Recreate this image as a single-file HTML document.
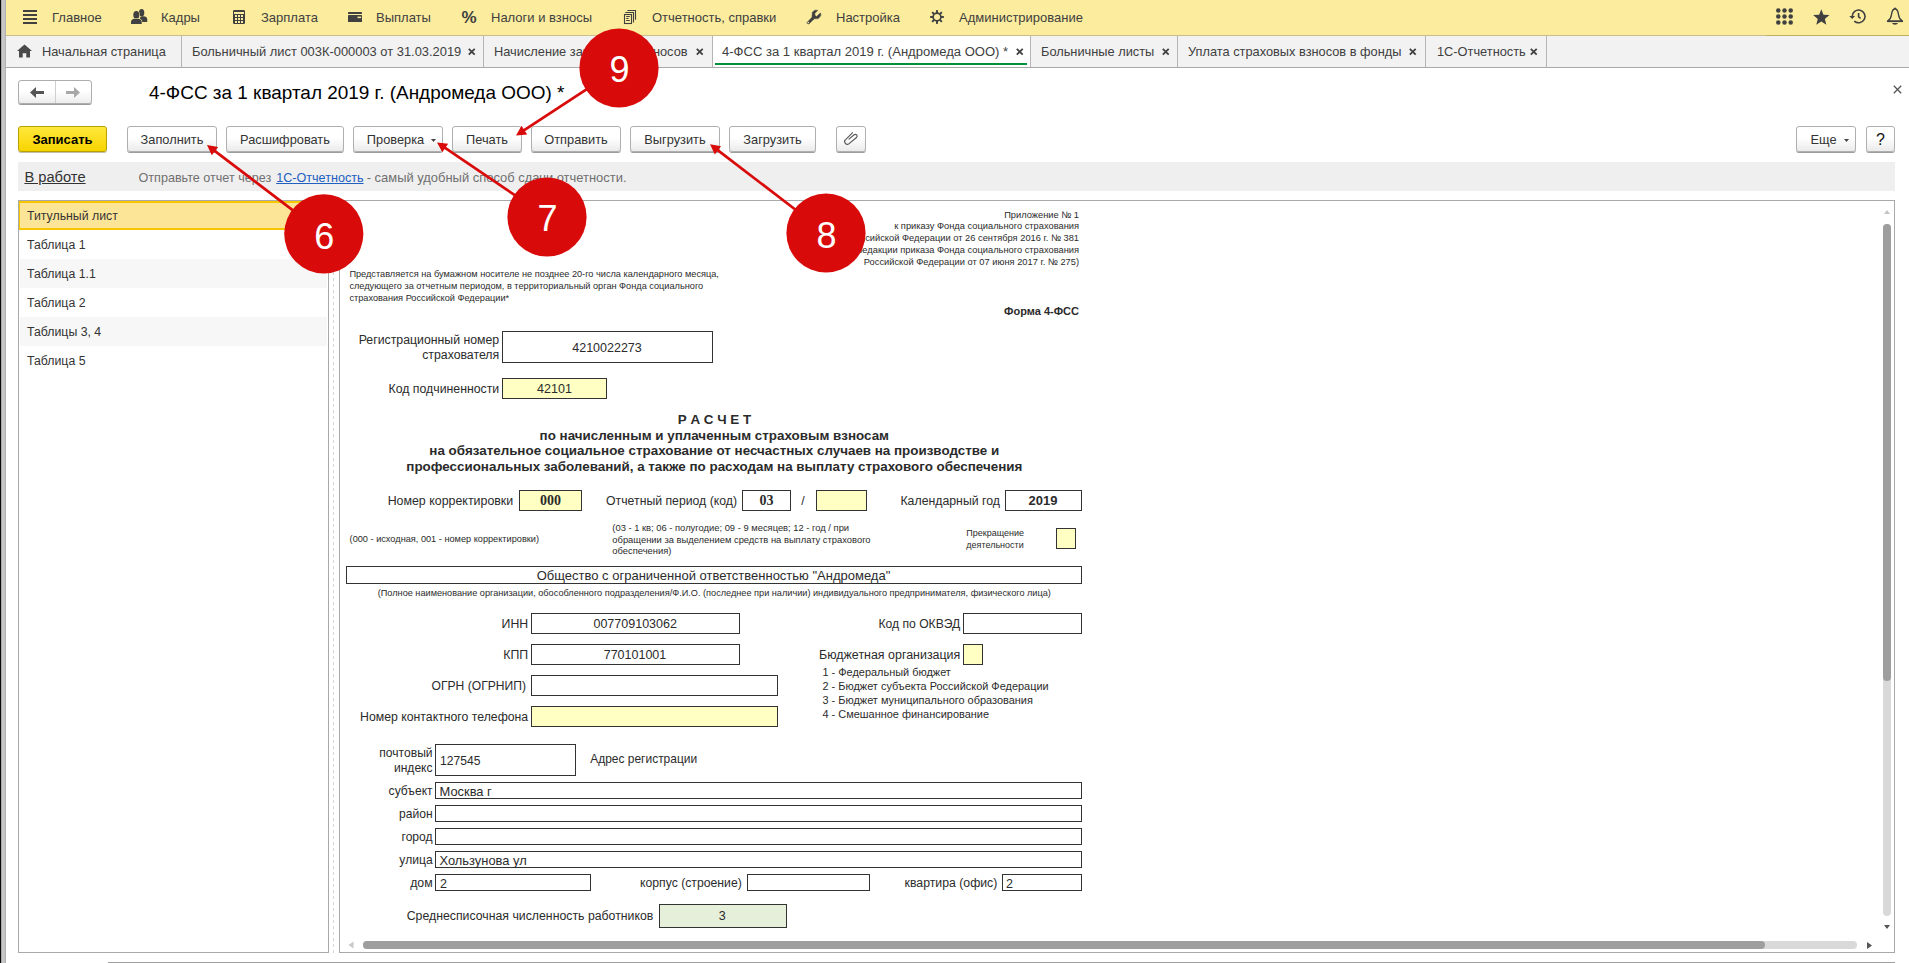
<!DOCTYPE html>
<html><head><meta charset="utf-8"><title>4-ФСС</title>
<style>
html,body{margin:0;padding:0}
body{width:1909px;height:963px;position:relative;overflow:hidden;background:#fff;font-family:'Liberation Sans',sans-serif}
.t{position:absolute;white-space:nowrap;line-height:1}
svg{overflow:visible}
</style></head><body>
<div style="position:absolute;left:0px;top:0px;width:1px;height:963px;background:#0a0a0a"></div><div style="position:absolute;left:1px;top:0px;width:5px;height:963px;background:linear-gradient(90deg,#9a9a9a,#c8c8c8 30%,#c4c4c4 70%,#a8a8a8)"></div><div style="position:absolute;left:6px;top:0px;width:1903px;height:35px;background:#FBEC9E"></div><div style="position:absolute;left:6px;top:35px;width:1760px;height:1px;background:#C9BF8C"></div><div style="position:absolute;left:1766px;top:35px;width:143px;height:1px;background:#BEB062"></div><div style="position:absolute;left:23px;top:10px;width:14px;height:2px;background:#404040"></div><div style="position:absolute;left:23px;top:14px;width:14px;height:2px;background:#404040"></div><div style="position:absolute;left:23px;top:18px;width:14px;height:2px;background:#404040"></div><div style="position:absolute;left:23px;top:22px;width:14px;height:2px;background:#404040"></div><div class="t" style="left:52.00px;top:11.00px;font-size:13px;color:#404040;font-family:'Liberation Sans',sans-serif;">Главное</div><svg style="position:absolute;left:131px;top:8px" width="17" height="17" viewBox="0 0 17 17"><g fill="#404040">
<ellipse cx="10.6" cy="4.7" rx="2.7" ry="3.8"/>
<path d="M9 14 L9 9.6 C9.8 8.8 11 8.3 12.6 8.3 C14.6 8.3 16.2 9.3 16.2 11.2 L16.2 14 Z"/>
</g>
<g fill="#404040" stroke="#FBEC9E" stroke-width="1.1" paint-order="stroke">
<ellipse cx="5.3" cy="6.9" rx="3" ry="3.9"/>
<path d="M0 16 L0 13.8 C0 12 1.6 10.9 3.4 10.7 L7.3 10.7 C9 10.9 10.7 12 10.7 13.8 L10.7 16 Z"/>
</g></svg><div class="t" style="left:161.00px;top:11.00px;font-size:13px;color:#404040;font-family:'Liberation Sans',sans-serif;">Кадры</div><svg style="position:absolute;left:233px;top:10px" width="12" height="14" viewBox="0 0 12 14"><rect x="0" y="0" width="12" height="14" rx="1.2" fill="#404040"/>
<rect x="1" y="2" width="10" height="2" fill="#FBEC9E"/>
<g fill="#FBEC9E"><rect x="2" y="5" width="2" height="2"/><rect x="5" y="5" width="2" height="2"/><rect x="8" y="5" width="2" height="2"/><rect x="2" y="8" width="2" height="2"/><rect x="5" y="8" width="2" height="2"/><rect x="8" y="8" width="2" height="2"/><rect x="2" y="11" width="2" height="2"/><rect x="5" y="11" width="2" height="2"/><rect x="8" y="11" width="2" height="2"/></g></svg><div class="t" style="left:261.00px;top:11.00px;font-size:13px;color:#404040;font-family:'Liberation Sans',sans-serif;">Зарплата</div><svg style="position:absolute;left:348px;top:12px" width="14" height="10" viewBox="0 0 14 10"><rect x="0" y="0" width="14" height="2" rx="0.6" fill="#404040"/>
<rect x="0" y="3" width="14" height="7" rx="0.6" fill="#404040"/>
<rect x="9.5" y="4.6" width="3.6" height="1.5" fill="#FBEC9E"/></svg><div class="t" style="left:376.00px;top:11.00px;font-size:13px;color:#404040;font-family:'Liberation Sans',sans-serif;">Выплаты</div><div class="t" style="left:461.50px;top:9.00px;font-size:17px;color:#404040;font-weight:bold;font-family:'Liberation Sans',sans-serif;">%</div><div class="t" style="left:491.00px;top:11.00px;font-size:13px;color:#404040;font-family:'Liberation Sans',sans-serif;">Налоги и взносы</div><svg style="position:absolute;left:615px;top:4px" width="24" height="22" viewBox="0 0 24 22"><g fill="none" stroke="#404040" stroke-width="1.1">
<rect x="9.5" y="10.5" width="7" height="9"/>
<path d="M10.3 8.5 H18.5 V18.6"/>
<path d="M12.3 6.5 H20.5 V15.7"/>
<path d="M11.2 12.5 H14.8 M11.2 14.5 H13.6 M11.2 16.5 H14.8"/>
</g></svg><div class="t" style="left:652.00px;top:11.00px;font-size:13px;color:#404040;font-family:'Liberation Sans',sans-serif;">Отчетность, справки</div><svg style="position:absolute;left:802px;top:6px" width="24" height="22" viewBox="0 0 24 22"><polygon fill="#404040" stroke="#404040" stroke-width="0.5" stroke-linejoin="round" points="10.3,6.2 12.8,4.2 15.75,4.3 12.8,7.5 13,9.6 14.6,10.5 18,7.3 18.7,7.1 18.7,9.8 16.4,12.6 12.3,12.8 6.85,18 4.6,16.9 10,11.2"/>
<circle cx="6.3" cy="16.5" r="0.8" fill="#FBEC9E"/></svg><div class="t" style="left:836.00px;top:11.00px;font-size:13px;color:#404040;font-family:'Liberation Sans',sans-serif;">Настройка</div><svg style="position:absolute;left:929px;top:9px" width="16" height="16" viewBox="0 0 16 16"><g fill="#404040"><rect x="7.05" y="1.1" width="1.9" height="3" transform="rotate(0 8 8)"/><rect x="7.05" y="1.1" width="1.9" height="3" transform="rotate(45 8 8)"/><rect x="7.05" y="1.1" width="1.9" height="3" transform="rotate(90 8 8)"/><rect x="7.05" y="1.1" width="1.9" height="3" transform="rotate(135 8 8)"/><rect x="7.05" y="1.1" width="1.9" height="3" transform="rotate(180 8 8)"/><rect x="7.05" y="1.1" width="1.9" height="3" transform="rotate(225 8 8)"/><rect x="7.05" y="1.1" width="1.9" height="3" transform="rotate(270 8 8)"/><rect x="7.05" y="1.1" width="1.9" height="3" transform="rotate(315 8 8)"/></g><circle cx="8" cy="8" r="3.9" fill="none" stroke="#404040" stroke-width="1.7"/></svg><div class="t" style="left:959.00px;top:11.00px;font-size:13px;color:#404040;font-family:'Liberation Sans',sans-serif;">Администрирование</div><svg style="position:absolute;left:1776px;top:8px" width="17" height="17" viewBox="0 0 17 17"><circle cx="2.3" cy="2.4" r="2.25" fill="#404040"/><circle cx="2.3" cy="8.4" r="2.25" fill="#404040"/><circle cx="2.3" cy="14.4" r="2.25" fill="#404040"/><circle cx="8.5" cy="2.4" r="2.25" fill="#404040"/><circle cx="8.5" cy="8.4" r="2.25" fill="#404040"/><circle cx="8.5" cy="14.4" r="2.25" fill="#404040"/><circle cx="14.7" cy="2.4" r="2.25" fill="#404040"/><circle cx="14.7" cy="8.4" r="2.25" fill="#404040"/><circle cx="14.7" cy="14.4" r="2.25" fill="#404040"/></svg><svg style="position:absolute;left:1813px;top:8px" width="17" height="18" viewBox="0 0 17 18"><polygon fill="#404040" points="8.30,1.20 10.47,6.78 16.45,7.12 11.82,10.91 13.34,16.70 8.30,13.47 3.26,16.70 4.78,10.91 0.15,7.12 6.13,6.78"/></svg><svg style="position:absolute;left:1848px;top:8px" width="19" height="18" viewBox="0 0 19 18"><g fill="none" stroke="#404040" stroke-width="1.6">
<path d="M4.2 8.4 A6.4 6.4 0 1 1 6.27 13.11"/>
<path d="M10.6 5 V8.9 L12.6 10.4"/>
</g>
<path d="M1.3 7.9 L7.1 7.9 L4.2 11.1 Z" fill="#404040"/></svg><svg style="position:absolute;left:1886px;top:7px" width="18" height="19" viewBox="0 0 18 19"><path fill="none" stroke="#404040" stroke-width="1.4" stroke-linejoin="round" d="M9 1.7 C6.6 1.9 5.9 4.2 5.4 8 C5 11 4.4 12.6 1.6 14.2 L16.4 14.2 C13.6 12.6 13 11 12.6 8 C12.1 4.2 11.4 1.9 9 1.7 Z"/>
<path d="M1.2 14.3 H16.8" stroke="#404040" stroke-width="1.6"/>
<path fill="#404040" d="M6.1 16.1 H11.9 C11.5 17.3 10.4 17.7 9 17.7 C7.6 17.7 6.5 17.3 6.1 16.1 Z"/>
<circle cx="9" cy="1.3" r="0.9" fill="#404040"/></svg><div style="position:absolute;left:6px;top:36px;width:1903px;height:31px;background:#F2F2F2"></div><div style="position:absolute;left:6px;top:67px;width:1903px;height:1px;background:#A9A9A9"></div><div style="position:absolute;left:712px;top:36px;width:318px;height:31px;background:#FFFFFF"></div><div style="position:absolute;left:181px;top:36px;width:1px;height:31px;background:#B5B5B5"></div><div style="position:absolute;left:483px;top:36px;width:1px;height:31px;background:#B5B5B5"></div><div style="position:absolute;left:712px;top:36px;width:1px;height:31px;background:#B5B5B5"></div><div style="position:absolute;left:1030px;top:36px;width:1px;height:31px;background:#B5B5B5"></div><div style="position:absolute;left:1177px;top:36px;width:1px;height:31px;background:#B5B5B5"></div><div style="position:absolute;left:1425px;top:36px;width:1px;height:31px;background:#B5B5B5"></div><div style="position:absolute;left:1546px;top:36px;width:1px;height:31px;background:#B5B5B5"></div><div style="position:absolute;left:715px;top:63px;width:312px;height:2px;background:#00903A"></div><svg style="position:absolute;left:17px;top:44px" width="16" height="14" viewBox="0 0 16 14"><path fill="#4a4a4a" d="M7.5 0.5 L15 7 L13 7 L13 13.5 L9.3 13.5 L9.3 9.3 L5.7 9.3 L5.7 13.5 L2 13.5 L2 7 L0 7 Z"/></svg><div class="t" style="left:42.00px;top:46.00px;font-size:12.8px;color:#404040;font-family:'Liberation Sans',sans-serif;">Начальная страница</div><div class="t" style="left:192.00px;top:46.00px;font-size:12.9px;color:#404040;font-family:'Liberation Sans',sans-serif;">Больничный лист 003К-000003 от 31.03.2019</div><div class="t" style="left:494.00px;top:46.00px;font-size:12.8px;color:#404040;font-family:'Liberation Sans',sans-serif;">Начисление зарплаты и взносов</div><div class="t" style="left:722.00px;top:45.00px;font-size:13.05px;color:#404040;font-family:'Liberation Sans',sans-serif;">4-ФСС за 1 квартал 2019 г. (Андромеда ООО) *</div><div class="t" style="left:1041.00px;top:46.00px;font-size:12.8px;color:#404040;font-family:'Liberation Sans',sans-serif;">Больничные листы</div><div class="t" style="left:1188.00px;top:46.00px;font-size:12.8px;color:#404040;font-family:'Liberation Sans',sans-serif;">Уплата страховых взносов в фонды</div><div class="t" style="left:1437.00px;top:46.00px;font-size:12.8px;color:#404040;font-family:'Liberation Sans',sans-serif;">1С-Отчетность</div><svg style="position:absolute;left:467.5px;top:48px" width="7.5" height="7.5" viewBox="0 0 7.5 7.5"><path d="M0.8 0.8 L6.7 6.7 M6.7 0.8 L0.8 6.7" stroke="#404040" stroke-width="1.8"/></svg><svg style="position:absolute;left:696px;top:48px" width="7.5" height="7.5" viewBox="0 0 7.5 7.5"><path d="M0.8 0.8 L6.7 6.7 M6.7 0.8 L0.8 6.7" stroke="#404040" stroke-width="1.8"/></svg><svg style="position:absolute;left:1015.5px;top:48px" width="7.5" height="7.5" viewBox="0 0 7.5 7.5"><path d="M0.8 0.8 L6.7 6.7 M6.7 0.8 L0.8 6.7" stroke="#404040" stroke-width="1.8"/></svg><svg style="position:absolute;left:1162px;top:48px" width="7.5" height="7.5" viewBox="0 0 7.5 7.5"><path d="M0.8 0.8 L6.7 6.7 M6.7 0.8 L0.8 6.7" stroke="#404040" stroke-width="1.8"/></svg><svg style="position:absolute;left:1409px;top:48px" width="7.5" height="7.5" viewBox="0 0 7.5 7.5"><path d="M0.8 0.8 L6.7 6.7 M6.7 0.8 L0.8 6.7" stroke="#404040" stroke-width="1.8"/></svg><svg style="position:absolute;left:1530px;top:48px" width="7.5" height="7.5" viewBox="0 0 7.5 7.5"><path d="M0.8 0.8 L6.7 6.7 M6.7 0.8 L0.8 6.7" stroke="#404040" stroke-width="1.8"/></svg><div style="position:absolute;left:18px;top:80px;width:74px;height:24px;box-sizing:border-box;border:1px solid #ADADAD;border-radius:3px;background:linear-gradient(#fff 0%,#fff 45%,#EDEDED 100%);box-shadow:0 1px 0 #9a9a9a"></div><div style="position:absolute;left:55px;top:81px;width:1px;height:22px;background:#CFCFCF"></div><svg style="position:absolute;left:30px;top:87px" width="15" height="11" viewBox="0 0 15 11"><path fill="#555" d="M0 5.4 L6 0 L6 4 L14 4 L14 7 L6 7 L6 11 Z"/></svg><svg style="position:absolute;left:66px;top:87px" width="15" height="11" viewBox="0 0 15 11"><path fill="#A8A8A8" d="M14 5.4 L8 0 L8 4 L0 4 L0 7 L8 7 L8 11 Z"/></svg><div class="t" style="left:149.00px;top:84.00px;font-size:18.95px;color:#000;font-family:'Liberation Sans',sans-serif;">4-ФСС за 1 квартал 2019 г. (Андромеда ООО) *</div><svg style="position:absolute;left:1893px;top:85px" width="9" height="9" viewBox="0 0 9 9"><path d="M0.8 0.8 L8.2 8.2 M8.2 0.8 L0.8 8.2" stroke="#555" stroke-width="1.3"/></svg><div style="position:absolute;left:18px;top:126px;width:89px;height:26px;box-sizing:border-box;border:1px solid #B8A000;border-radius:3px;background:linear-gradient(#FFE83D,#F7D400);box-shadow:0 1px 0 rgba(120,110,60,.45)"></div><div class="t" style="left:-537.50px;width:1200px;text-align:center;top:133.00px;font-size:13px;color:#000;font-weight:bold;font-family:'Liberation Sans',sans-serif;">Записать</div><div style="position:absolute;left:127px;top:126px;width:90px;height:26px;box-sizing:border-box;border:1px solid #AFAFAF;border-radius:3px;background:linear-gradient(#FFFFFF 0%,#FFFFFF 45%,#EBEBEB 100%);box-shadow:0 1px 0 #9d9d9d"></div><div class="t" style="left:-428.00px;width:1200px;text-align:center;top:134.00px;font-size:12.8px;color:#333;font-family:'Liberation Sans',sans-serif;">Заполнить</div><div style="position:absolute;left:226px;top:126px;width:118px;height:26px;box-sizing:border-box;border:1px solid #AFAFAF;border-radius:3px;background:linear-gradient(#FFFFFF 0%,#FFFFFF 45%,#EBEBEB 100%);box-shadow:0 1px 0 #9d9d9d"></div><div class="t" style="left:-315.00px;width:1200px;text-align:center;top:134.00px;font-size:12.8px;color:#333;font-family:'Liberation Sans',sans-serif;">Расшифровать</div><div style="position:absolute;left:353px;top:126px;width:90px;height:26px;box-sizing:border-box;border:1px solid #AFAFAF;border-radius:3px;background:linear-gradient(#FFFFFF 0%,#FFFFFF 45%,#EBEBEB 100%);box-shadow:0 1px 0 #9d9d9d"></div><div class="t" style="left:-204.50px;width:1200px;text-align:center;top:134.00px;font-size:12.8px;color:#333;font-family:'Liberation Sans',sans-serif;">Проверка</div><svg style="position:absolute;left:431px;top:139px" width="5" height="3" viewBox="0 0 5 3"><path d="M0 0 H5 L2.5 3 Z" fill="#444"/></svg><div style="position:absolute;left:452px;top:126px;width:70px;height:26px;box-sizing:border-box;border:1px solid #AFAFAF;border-radius:3px;background:linear-gradient(#FFFFFF 0%,#FFFFFF 45%,#EBEBEB 100%);box-shadow:0 1px 0 #9d9d9d"></div><div class="t" style="left:-113.00px;width:1200px;text-align:center;top:134.00px;font-size:12.8px;color:#333;font-family:'Liberation Sans',sans-serif;">Печать</div><div style="position:absolute;left:531px;top:126px;width:90px;height:26px;box-sizing:border-box;border:1px solid #AFAFAF;border-radius:3px;background:linear-gradient(#FFFFFF 0%,#FFFFFF 45%,#EBEBEB 100%);box-shadow:0 1px 0 #9d9d9d"></div><div class="t" style="left:-24.00px;width:1200px;text-align:center;top:134.00px;font-size:12.8px;color:#333;font-family:'Liberation Sans',sans-serif;">Отправить</div><div style="position:absolute;left:630px;top:126px;width:90px;height:26px;box-sizing:border-box;border:1px solid #AFAFAF;border-radius:3px;background:linear-gradient(#FFFFFF 0%,#FFFFFF 45%,#EBEBEB 100%);box-shadow:0 1px 0 #9d9d9d"></div><div class="t" style="left:75.00px;width:1200px;text-align:center;top:134.00px;font-size:12.8px;color:#333;font-family:'Liberation Sans',sans-serif;">Выгрузить</div><div style="position:absolute;left:729px;top:126px;width:87px;height:26px;box-sizing:border-box;border:1px solid #AFAFAF;border-radius:3px;background:linear-gradient(#FFFFFF 0%,#FFFFFF 45%,#EBEBEB 100%);box-shadow:0 1px 0 #9d9d9d"></div><div class="t" style="left:172.50px;width:1200px;text-align:center;top:134.00px;font-size:12.8px;color:#333;font-family:'Liberation Sans',sans-serif;">Загрузить</div><div style="position:absolute;left:836px;top:126px;width:30px;height:26px;box-sizing:border-box;border:1px solid #AFAFAF;border-radius:3px;background:linear-gradient(#FFFFFF 0%,#FFFFFF 45%,#EBEBEB 100%);box-shadow:0 1px 0 #9d9d9d"></div><svg style="position:absolute;left:840px;top:127px" width="22" height="23" viewBox="0 0 22 23"><g transform="translate(11.2 11.4) rotate(-40)" fill="none" stroke="#555" stroke-width="1.1"><path d="M-5 -2.7 A2.7 2.7 0 0 0 -5 2.7 L4.6 2.7 A1.8 1.8 0 0 0 4.6 -0.9 L-2.6 -0.9"/><path d="M-5 -2.7 L5.2 -3.6"/></g></svg><div style="position:absolute;left:1796px;top:126px;width:60px;height:26px;box-sizing:border-box;border:1px solid #AFAFAF;border-radius:3px;background:linear-gradient(#FFFFFF 0%,#FFFFFF 45%,#EBEBEB 100%);box-shadow:0 1px 0 #9d9d9d"></div><div class="t" style="left:1223.50px;width:1200px;text-align:center;top:134.00px;font-size:12.8px;color:#333;font-family:'Liberation Sans',sans-serif;">Еще</div><svg style="position:absolute;left:1844px;top:139px" width="5" height="3" viewBox="0 0 5 3"><path d="M0 0 H5 L2.5 3 Z" fill="#444"/></svg><div style="position:absolute;left:1866px;top:126px;width:29px;height:26px;box-sizing:border-box;border:1px solid #AFAFAF;border-radius:3px;background:linear-gradient(#FFFFFF 0%,#FFFFFF 45%,#EBEBEB 100%);box-shadow:0 1px 0 #9d9d9d"></div><div class="t" style="left:1280.50px;width:1200px;text-align:center;top:132.00px;font-size:16px;color:#111;font-family:'Liberation Sans',sans-serif;">?</div><div style="position:absolute;left:18px;top:162px;width:1877px;height:29px;background:#EFEFEF"></div><div class="t" style="left:24.40px;top:170.00px;font-size:14.7px;color:#333;font-family:'Liberation Sans',sans-serif;text-decoration:underline;">В работе</div><div class="t" style="left:138.50px;top:172.00px;font-size:12.6px;color:#707070;font-family:'Liberation Sans',sans-serif;">Отправьте отчет через </div><div class="t" style="left:276.20px;top:172.00px;font-size:12.6px;color:#2060C0;font-family:'Liberation Sans',sans-serif;text-decoration:underline;">1С-Отчетность</div><div class="t" style="left:366.70px;top:172.00px;font-size:12.95px;color:#707070;font-family:'Liberation Sans',sans-serif;">- самый удобный способ сдачи отчетности.</div><div style="position:absolute;left:18px;top:200px;width:311px;height:753px;box-sizing:border-box;border:1px solid #A9A9A9;background:#fff"></div><div style="position:absolute;left:19px;top:201px;width:309px;height:29px;box-sizing:border-box;border:2px solid #F7C600;border-left-width:1px;border-right-width:0;background:#FDE597"></div><div class="t" style="left:27.00px;top:210.00px;font-size:12.3px;color:#333;font-family:'Liberation Sans',sans-serif;">Титульный лист</div><div class="t" style="left:27.00px;top:239.00px;font-size:12.3px;color:#333;font-family:'Liberation Sans',sans-serif;">Таблица 1</div><div style="position:absolute;left:20px;top:259px;width:307px;height:29px;background:#F7F7F7"></div><div class="t" style="left:27.00px;top:268.00px;font-size:12.3px;color:#333;font-family:'Liberation Sans',sans-serif;">Таблица 1.1</div><div class="t" style="left:27.00px;top:297.00px;font-size:12.3px;color:#333;font-family:'Liberation Sans',sans-serif;">Таблица 2</div><div style="position:absolute;left:20px;top:317px;width:307px;height:29px;background:#F7F7F7"></div><div class="t" style="left:27.00px;top:326.00px;font-size:12.3px;color:#333;font-family:'Liberation Sans',sans-serif;">Таблицы 3, 4</div><div class="t" style="left:27.00px;top:355.00px;font-size:12.3px;color:#333;font-family:'Liberation Sans',sans-serif;">Таблица 5</div><div style="position:absolute;left:333px;top:200px;width:1px;height:753px;background:repeating-linear-gradient(#D5D5D5 0 3px,transparent 3px 6px)"></div><div style="position:absolute;left:339px;top:200px;width:1556px;height:753px;box-sizing:border-box;border:1px solid #A9A9A9;background:#fff"></div><svg style="position:absolute;left:1884px;top:210px" width="6" height="4" viewBox="0 0 6 4"><path d="M0 4 L3 0 L6 4 Z" fill="#C4C4C4"/></svg><div style="position:absolute;left:1883px;top:224px;width:8px;height:692px;background:#D9D9D9;border-radius:4px"></div><div style="position:absolute;left:1883px;top:224px;width:8px;height:457px;background:#9E9E9E;border-radius:4px"></div><svg style="position:absolute;left:1884px;top:925px" width="6" height="4" viewBox="0 0 6 4"><path d="M0 0 H6 L3 4 Z" fill="#555"/></svg><svg style="position:absolute;left:348px;top:941px" width="6" height="8" viewBox="0 0 6 8"><path d="M5.5 0.5 L5.5 7.5 L0.5 4 Z" fill="#C8C8C8"/></svg><div style="position:absolute;left:363px;top:941px;width:1494px;height:8px;background:#D9D9D9;border-radius:4px"></div><div style="position:absolute;left:363px;top:941px;width:1402px;height:8px;background:#9E9E9E;border-radius:4px"></div><svg style="position:absolute;left:1867px;top:941.5px" width="5" height="7" viewBox="0 0 5 7"><path d="M0 0 V7 L5 3.5 Z" fill="#555"/></svg><div style="position:absolute;left:108px;top:962px;width:1787px;height:1px;background:#A0A0A0"></div><div class="t" style="left:-121.00px;width:1200px;text-align:right;top:211.00px;font-size:9.3px;color:#2b2b2b;font-family:'Liberation Sans',sans-serif;">Приложение № 1</div><div class="t" style="left:-121.00px;width:1200px;text-align:right;top:222.00px;font-size:9.3px;color:#2b2b2b;font-family:'Liberation Sans',sans-serif;">к приказу Фонда социального страхования</div><div class="t" style="left:-121.00px;width:1200px;text-align:right;top:234.00px;font-size:9.3px;color:#2b2b2b;font-family:'Liberation Sans',sans-serif;">Российской Федерации от 26 сентября 2016 г. № 381</div><div class="t" style="left:-121.00px;width:1200px;text-align:right;top:246.00px;font-size:9.3px;color:#2b2b2b;font-family:'Liberation Sans',sans-serif;">(в редакции приказа Фонда социального страхования</div><div class="t" style="left:-121.00px;width:1200px;text-align:right;top:258.00px;font-size:9.3px;color:#2b2b2b;font-family:'Liberation Sans',sans-serif;">Российской Федерации от 07 июня 2017 г. № 275)</div><div class="t" style="left:349.40px;top:270.00px;font-size:9.2px;color:#2b2b2b;font-family:'Liberation Sans',sans-serif;">Представляется на бумажном носителе не позднее 20-го числа календарного месяца,</div><div class="t" style="left:349.40px;top:282.00px;font-size:9.2px;color:#2b2b2b;font-family:'Liberation Sans',sans-serif;">следующего за отчетным периодом, в территориальный орган Фонда социального</div><div class="t" style="left:349.40px;top:294.00px;font-size:9.2px;color:#2b2b2b;font-family:'Liberation Sans',sans-serif;">страхования Российской Федерации*</div><div class="t" style="left:-121.00px;width:1200px;text-align:right;top:306.00px;font-size:11px;color:#2b2b2b;font-weight:bold;font-family:'Liberation Sans',sans-serif;">Форма 4-ФСС</div><div style="position:absolute;left:502px;top:331px;width:211px;height:32px;box-sizing:border-box;border:1.3px solid #333;"></div><div class="t" style="left:-700.80px;width:1200px;text-align:right;top:334.00px;font-size:12.3px;color:#2b2b2b;font-family:'Liberation Sans',sans-serif;">Регистрационный номер</div><div class="t" style="left:-700.80px;width:1200px;text-align:right;top:349.00px;font-size:12.3px;color:#2b2b2b;font-family:'Liberation Sans',sans-serif;">страхователя</div><div class="t" style="left:7.00px;width:1200px;text-align:center;top:342.00px;font-size:12.5px;color:#2b2b2b;font-family:'Liberation Sans',sans-serif;">4210022273</div><div style="position:absolute;left:502px;top:378px;width:105px;height:21px;box-sizing:border-box;border:1.3px solid #333;background:#FFFFC4;"></div><div class="t" style="left:-700.80px;width:1200px;text-align:right;top:383.00px;font-size:12.3px;color:#2b2b2b;font-family:'Liberation Sans',sans-serif;">Код подчиненности</div><div class="t" style="left:-45.50px;width:1200px;text-align:center;top:383.00px;font-size:12.5px;color:#2b2b2b;font-family:'Liberation Sans',sans-serif;">42101</div><div class="t" style="left:114.50px;width:1200px;text-align:center;top:413.00px;font-size:13.4px;color:#2b2b2b;font-weight:bold;font-family:'Liberation Sans',sans-serif;">Р А С Ч Е Т</div><div class="t" style="left:114.30px;width:1200px;text-align:center;top:429.00px;font-size:13.4px;color:#2b2b2b;font-weight:bold;font-family:'Liberation Sans',sans-serif;">по начисленным и уплаченным страховым взносам</div><div class="t" style="left:114.30px;width:1200px;text-align:center;top:444.00px;font-size:13.4px;color:#2b2b2b;font-weight:bold;font-family:'Liberation Sans',sans-serif;">на обязательное социальное страхование от несчастных случаев на производстве и</div><div class="t" style="left:114.30px;width:1200px;text-align:center;top:460.00px;font-size:13.4px;color:#2b2b2b;font-weight:bold;font-family:'Liberation Sans',sans-serif;">профессиональных заболеваний, а также по расходам на выплату страхового обеспечения</div><div class="t" style="left:-686.80px;width:1200px;text-align:right;top:495.00px;font-size:12.4px;color:#2b2b2b;font-family:'Liberation Sans',sans-serif;">Номер корректировки</div><div style="position:absolute;left:519px;top:490px;width:63px;height:21px;box-sizing:border-box;border:1.3px solid #333;background:#FFFFC4;"></div><div class="t" style="left:-49.50px;width:1200px;text-align:center;top:494.00px;font-size:14px;color:#2b2b2b;font-weight:bold;font-family:'Liberation Serif',serif;">000</div><div class="t" style="left:-463.00px;width:1200px;text-align:right;top:495.00px;font-size:12.25px;color:#2b2b2b;font-family:'Liberation Sans',sans-serif;">Отчетный период (код)</div><div style="position:absolute;left:742px;top:490px;width:49px;height:21px;box-sizing:border-box;border:1.3px solid #333;"></div><div class="t" style="left:166.50px;width:1200px;text-align:center;top:494.00px;font-size:14px;color:#2b2b2b;font-weight:bold;font-family:'Liberation Serif',serif;">03</div><div class="t" style="left:203.00px;width:1200px;text-align:center;top:495.00px;font-size:12.3px;color:#2b2b2b;font-family:'Liberation Sans',sans-serif;">/</div><div style="position:absolute;left:816px;top:490px;width:51px;height:21px;box-sizing:border-box;border:1.3px solid #333;background:#FFFFC4;"></div><div class="t" style="left:-200.00px;width:1200px;text-align:right;top:495.00px;font-size:12.3px;color:#2b2b2b;font-family:'Liberation Sans',sans-serif;">Календарный год</div><div style="position:absolute;left:1005px;top:490px;width:77px;height:21px;box-sizing:border-box;border:1.3px solid #333;"></div><div class="t" style="left:443.00px;width:1200px;text-align:center;top:494.00px;font-size:13px;color:#2b2b2b;font-weight:bold;font-family:'Liberation Sans',sans-serif;">2019</div><div class="t" style="left:349.60px;top:535.00px;font-size:9.2px;color:#2b2b2b;font-family:'Liberation Sans',sans-serif;">(000 - исходная, 001 - номер корректировки)</div><div class="t" style="left:612.30px;top:523.00px;font-size:9.4px;color:#2b2b2b;font-family:'Liberation Sans',sans-serif;">(03 - 1 кв; 06 - полугодие; 09 - 9 месяцев; 12 - год / при</div><div class="t" style="left:612.30px;top:535.00px;font-size:9.4px;color:#2b2b2b;font-family:'Liberation Sans',sans-serif;">обращении за выделением средств на выплату страхового</div><div class="t" style="left:612.30px;top:546.00px;font-size:9.4px;color:#2b2b2b;font-family:'Liberation Sans',sans-serif;">обеспечения)</div><div class="t" style="left:966.30px;top:529.00px;font-size:9px;color:#2b2b2b;font-family:'Liberation Sans',sans-serif;">Прекращение</div><div class="t" style="left:966.30px;top:541.00px;font-size:9px;color:#2b2b2b;font-family:'Liberation Sans',sans-serif;">деятельности</div><div style="position:absolute;left:1056px;top:528px;width:20px;height:21px;box-sizing:border-box;border:1.3px solid #333;background:#FFFFC4;"></div><div style="position:absolute;left:346px;top:566px;width:736px;height:18px;box-sizing:border-box;border:1.3px solid #333;"></div><div class="t" style="left:113.50px;width:1200px;text-align:center;top:569.00px;font-size:13px;color:#2b2b2b;font-family:'Liberation Sans',sans-serif;">Общество с ограниченной ответственностью &quot;Андромеда&quot;</div><div class="t" style="left:114.30px;width:1200px;text-align:center;top:589.00px;font-size:9.17px;color:#2b2b2b;font-family:'Liberation Sans',sans-serif;">(Полное наименование организации, обособленного подразделения/Ф.И.О. (последнее при наличии) индивидуального предпринимателя, физического лица)</div><div style="position:absolute;left:531px;top:613px;width:209px;height:21px;box-sizing:border-box;border:1.3px solid #333;"></div><div class="t" style="left:-671.80px;width:1200px;text-align:right;top:618.00px;font-size:12.3px;color:#2b2b2b;font-family:'Liberation Sans',sans-serif;">ИНН</div><div class="t" style="left:35.20px;width:1200px;text-align:center;top:618.00px;font-size:12.5px;color:#2b2b2b;font-family:'Liberation Sans',sans-serif;">007709103062</div><div style="position:absolute;left:531px;top:644px;width:209px;height:21px;box-sizing:border-box;border:1.3px solid #333;"></div><div class="t" style="left:-671.80px;width:1200px;text-align:right;top:649.00px;font-size:12.3px;color:#2b2b2b;font-family:'Liberation Sans',sans-serif;">КПП</div><div class="t" style="left:35.00px;width:1200px;text-align:center;top:649.00px;font-size:12.5px;color:#2b2b2b;font-family:'Liberation Sans',sans-serif;">770101001</div><div style="position:absolute;left:531px;top:675px;width:247px;height:21px;box-sizing:border-box;border:1.3px solid #333;"></div><div class="t" style="left:-674.10px;width:1200px;text-align:right;top:680.00px;font-size:12.1px;color:#2b2b2b;font-family:'Liberation Sans',sans-serif;">ОГРН (ОГРНИП)</div><div style="position:absolute;left:531px;top:706px;width:247px;height:21px;box-sizing:border-box;border:1.3px solid #333;background:#FFFFC4;"></div><div class="t" style="left:-671.80px;width:1200px;text-align:right;top:711.00px;font-size:12.27px;color:#2b2b2b;font-family:'Liberation Sans',sans-serif;">Номер контактного телефона</div><div style="position:absolute;left:963px;top:613px;width:119px;height:21px;box-sizing:border-box;border:1.3px solid #333;"></div><div class="t" style="left:-239.70px;width:1200px;text-align:right;top:618.00px;font-size:12.15px;color:#2b2b2b;font-family:'Liberation Sans',sans-serif;">Код по ОКВЭД</div><div style="position:absolute;left:963px;top:644px;width:20px;height:21px;box-sizing:border-box;border:1.3px solid #333;background:#FFFFC4;"></div><div class="t" style="left:-239.70px;width:1200px;text-align:right;top:649.00px;font-size:12.45px;color:#2b2b2b;font-family:'Liberation Sans',sans-serif;">Бюджетная организация</div><div class="t" style="left:822.50px;top:667.00px;font-size:10.95px;color:#2b2b2b;font-family:'Liberation Sans',sans-serif;">1 - Федеральный бюджет</div><div class="t" style="left:822.50px;top:681.00px;font-size:10.95px;color:#2b2b2b;font-family:'Liberation Sans',sans-serif;">2 - Бюджет субъекта Российской Федерации</div><div class="t" style="left:822.50px;top:695.00px;font-size:10.95px;color:#2b2b2b;font-family:'Liberation Sans',sans-serif;">3 - Бюджет муниципального образования</div><div class="t" style="left:822.50px;top:709.00px;font-size:10.95px;color:#2b2b2b;font-family:'Liberation Sans',sans-serif;">4 - Смешанное финансирование</div><div style="position:absolute;left:435px;top:744px;width:141px;height:32px;box-sizing:border-box;border:1.3px solid #333;"></div><div class="t" style="left:-767.40px;width:1200px;text-align:right;top:747.00px;font-size:12.1px;color:#2b2b2b;font-family:'Liberation Sans',sans-serif;">почтовый</div><div class="t" style="left:-767.40px;width:1200px;text-align:right;top:762.00px;font-size:12.1px;color:#2b2b2b;font-family:'Liberation Sans',sans-serif;">индекс</div><div class="t" style="left:440.10px;top:755.00px;font-size:12.1px;color:#2b2b2b;font-family:'Liberation Sans',sans-serif;">127545</div><div class="t" style="left:590.20px;top:754.00px;font-size:11.97px;color:#2b2b2b;font-family:'Liberation Sans',sans-serif;">Адрес регистрации</div><div style="position:absolute;left:435px;top:782px;width:647px;height:17px;box-sizing:border-box;border:1.3px solid #333;"></div><div class="t" style="left:-767.40px;width:1200px;text-align:right;top:785.00px;font-size:12.1px;color:#2b2b2b;font-family:'Liberation Sans',sans-serif;">субъект</div><div class="t" style="left:439.50px;top:786.00px;font-size:12.9px;color:#2b2b2b;font-family:'Liberation Sans',sans-serif;">Москва г</div><div style="position:absolute;left:435px;top:805px;width:647px;height:17px;box-sizing:border-box;border:1.3px solid #333;"></div><div class="t" style="left:-767.40px;width:1200px;text-align:right;top:808.00px;font-size:12.1px;color:#2b2b2b;font-family:'Liberation Sans',sans-serif;">район</div><div style="position:absolute;left:435px;top:828px;width:647px;height:17px;box-sizing:border-box;border:1.3px solid #333;"></div><div class="t" style="left:-767.40px;width:1200px;text-align:right;top:831.00px;font-size:12.1px;color:#2b2b2b;font-family:'Liberation Sans',sans-serif;">город</div><div style="position:absolute;left:435px;top:851px;width:647px;height:17px;box-sizing:border-box;border:1.3px solid #333;"></div><div class="t" style="left:-767.40px;width:1200px;text-align:right;top:854.00px;font-size:12.1px;color:#2b2b2b;font-family:'Liberation Sans',sans-serif;">улица</div><div class="t" style="left:439.50px;top:855.00px;font-size:12.9px;color:#2b2b2b;font-family:'Liberation Sans',sans-serif;">Хользунова ул</div><div style="position:absolute;left:435px;top:874px;width:156px;height:17px;box-sizing:border-box;border:1.3px solid #333;"></div><div class="t" style="left:-767.40px;width:1200px;text-align:right;top:877.00px;font-size:12.3px;color:#2b2b2b;font-family:'Liberation Sans',sans-serif;">дом</div><div class="t" style="left:440.00px;top:878.00px;font-size:12.5px;color:#2b2b2b;font-family:'Liberation Sans',sans-serif;">2</div><div class="t" style="left:640.00px;top:877.00px;font-size:12.22px;color:#2b2b2b;font-family:'Liberation Sans',sans-serif;">корпус (строение)</div><div style="position:absolute;left:747px;top:874px;width:123px;height:17px;box-sizing:border-box;border:1.3px solid #333;"></div><div class="t" style="left:904.60px;top:877.00px;font-size:12.28px;color:#2b2b2b;font-family:'Liberation Sans',sans-serif;">квартира (офис)</div><div style="position:absolute;left:1002px;top:874px;width:80px;height:17px;box-sizing:border-box;border:1.3px solid #333;"></div><div class="t" style="left:1006.00px;top:878.00px;font-size:12.5px;color:#2b2b2b;font-family:'Liberation Sans',sans-serif;">2</div><div class="t" style="left:406.70px;top:910.00px;font-size:12.31px;color:#2b2b2b;font-family:'Liberation Sans',sans-serif;">Среднесписочная численность работников</div><div style="position:absolute;left:659px;top:904px;width:128px;height:24px;box-sizing:border-box;border:1.3px solid #333;background:#E6EFDA;"></div><div class="t" style="left:122.30px;width:1200px;text-align:center;top:910.00px;font-size:12.5px;color:#2b2b2b;font-family:'Liberation Sans',sans-serif;">3</div><svg style="position:absolute;left:0;top:0" width="1909" height="963"><line x1="213.37" y1="149.84" x2="293.95" y2="211.10" stroke="#D80A0A" stroke-width="2.7"/><polygon points="207.00,145.00 211.81,155.19 218.11,146.91" fill="#D80A0A"/><line x1="443.62" y1="146.89" x2="515.96" y2="195.95" stroke="#D80A0A" stroke-width="2.7"/><polygon points="437.00,142.40 442.36,152.32 448.19,143.71" fill="#D80A0A"/><line x1="716.36" y1="149.16" x2="796.21" y2="210.22" stroke="#D80A0A" stroke-width="2.7"/><polygon points="710.00,144.30 714.79,154.51 721.10,146.24" fill="#D80A0A"/><line x1="522.69" y1="131.21" x2="587.65" y2="88.58" stroke="#D80A0A" stroke-width="2.7"/><polygon points="516.00,135.60 527.21,134.46 521.51,125.77" fill="#D80A0A"/><circle cx="323.8" cy="233.8" r="39.6" fill="#D80A0A"/><circle cx="547" cy="217" r="39.6" fill="#D80A0A"/><circle cx="826" cy="233" r="39.6" fill="#D80A0A"/><circle cx="619" cy="68" r="39.6" fill="#D80A0A"/></svg><div class="t" style="left:-275.70px;width:1200px;text-align:center;top:219.00px;font-size:36px;color:#fff;font-family:'Liberation Sans',sans-serif;">6</div><div class="t" style="left:-52.50px;width:1200px;text-align:center;top:201.00px;font-size:36px;color:#fff;font-family:'Liberation Sans',sans-serif;">7</div><div class="t" style="left:226.50px;width:1200px;text-align:center;top:218.00px;font-size:36px;color:#fff;font-family:'Liberation Sans',sans-serif;">8</div><div class="t" style="left:19.50px;width:1200px;text-align:center;top:52.00px;font-size:36px;color:#fff;font-family:'Liberation Sans',sans-serif;">9</div>
</body></html>
